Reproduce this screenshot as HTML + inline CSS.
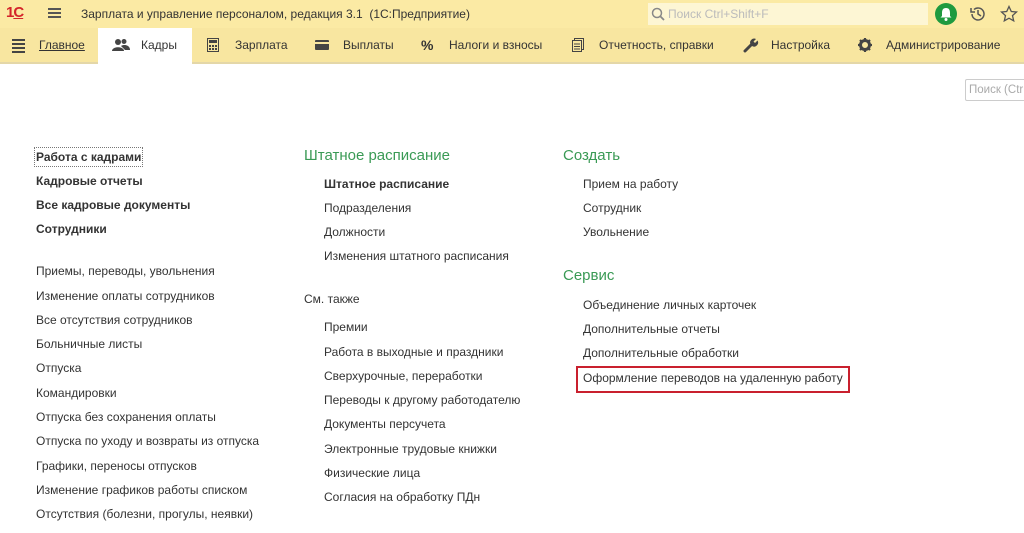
<!DOCTYPE html>
<html><head><meta charset="utf-8"><style>
body{margin:0;width:1024px;height:533px;background:#fff;position:relative;overflow:hidden;font-family:"Liberation Sans",Arial,sans-serif;color:#333}
.t{position:absolute;font-size:12px;line-height:16px;white-space:nowrap;top:0}
.b{font-weight:bold}
.h{position:absolute;font-size:15px;line-height:18px;color:#3a9a55;white-space:nowrap}
#top{position:absolute;left:0;top:0;width:1024px;height:28px;background:#fbeaa4}
#nav{position:absolute;left:0;top:28px;width:1024px;height:34px;background:#f8e6a0;border-bottom:2px solid #e4d7a8}
.n{position:absolute;top:0;height:34px;line-height:34px;font-size:12px;color:#333;white-space:nowrap}
</style></head><body>
<div id="top">
 <div style="position:absolute;left:6px;top:4px;font-size:15px;font-weight:bold;color:#d4252a;letter-spacing:-1px">1<span style="text-decoration:underline">C</span></div>
 <div style="position:absolute;left:48px;top:8px;width:13px;height:2px;background:#555;box-shadow:0 4px 0 #555,0 8px 0 #555"></div>
 <div class="t" style="left:81px;top:6px;color:#333">Зарплата и управление персоналом, редакция 3.1&nbsp; (1С:Предприятие)</div>
 <div style="position:absolute;left:648px;top:3px;width:280px;height:22px;background:#fdf6d4"></div>
 <svg style="position:absolute;left:651px;top:7px" width="14" height="14"><circle cx="6" cy="6" r="4.5" fill="none" stroke="#888" stroke-width="1.5"/><line x1="9" y1="9" x2="13" y2="13" stroke="#888" stroke-width="1.8"/></svg>
 <div class="t" style="left:668px;top:6px;color:#bbb">Поиск Ctrl+Shift+F</div>
 <svg style="position:absolute;left:935px;top:3px" width="22" height="22"><circle cx="11" cy="11" r="11" fill="#1f9a3f"/><path d="M11 5c-3 0-4 2-4 5v3l-1.5 1.5h11L15 13v-3c0-3-1-5-4-5z" fill="#fff"/><circle cx="11" cy="16.5" r="1.5" fill="#fff"/></svg>
 <svg style="position:absolute;left:969px;top:5px" width="18" height="18"><path d="M3 9a6 6 0 1 0 2-4.5" fill="none" stroke="#555" stroke-width="1.5"/><path d="M2 3v4h4" fill="none" stroke="#555" stroke-width="1.5"/><path d="M9 5v4l3 2" fill="none" stroke="#555" stroke-width="1.5"/></svg>
 <svg style="position:absolute;left:1000px;top:5px" width="18" height="18"><path d="M9 1.5l2.3 5 5.2.5-4 3.6 1.2 5.2L9 13.2 4.3 15.8l1.2-5.2-4-3.6 5.2-.5z" fill="none" stroke="#555" stroke-width="1.3"/></svg>
</div>
<div id="nav">
 <div style="position:absolute;left:12px;top:11px;width:13px;height:2px;background:#444;box-shadow:0 4px 0 #444,0 8px 0 #444,0 12px 0 #444"></div>
 <div class="n" style="left:39px;text-decoration:underline">Главное</div>
 <div style="position:absolute;left:98px;top:0;width:94px;height:36px;background:#fff"></div>
 <svg style="position:absolute;left:112px;top:10px" width="18" height="14"><circle cx="6" cy="4" r="3" fill="#444"/><circle cx="12" cy="3.5" r="2.5" fill="#444"/><path d="M0 13c0-5 12-5 12 0z" fill="#444"/><path d="M9 8c3-2 9-1 9 4h-5z" fill="#444"/></svg>
 <div class="n" style="left:141px">Кадры</div>
 <svg style="position:absolute;left:207px;top:10px" width="12" height="14"><rect x="0.5" y="0.5" width="11" height="13" fill="none" stroke="#444"/><rect x="2" y="2" width="8" height="3" fill="#444"/><path d="M2 7h2v2H2zM5 7h2v2H5zM8 7h2v2H8zM2 10h2v2H2zM5 10h2v2H5zM8 10h2v2H8z" fill="#444"/></svg>
 <div class="n" style="left:235px">Зарплата</div>
 <svg style="position:absolute;left:315px;top:12px" width="14" height="10"><rect width="14" height="10" rx="1" fill="#444"/><rect y="2" width="14" height="2" fill="#f8e6a0"/></svg>
 <div class="n" style="left:343px">Выплаты</div>
 <div class="n" style="left:421px;font-weight:bold;font-size:14px">%</div>
 <div class="n" style="left:449px">Налоги и взносы</div>
 <svg style="position:absolute;left:572px;top:10px" width="12" height="14"><rect x="2.5" y="0.5" width="9" height="11" fill="none" stroke="#444"/><rect x="0.5" y="2.5" width="9" height="11" fill="#f8e6a0" stroke="#444"/><path d="M2 6h6M2 8.5h6M2 11h6" stroke="#444"/></svg>
 <div class="n" style="left:599px">Отчетность, справки</div>
 <svg style="position:absolute;left:743px;top:9px" width="16" height="16"><path d="M2 14l7-7" stroke="#444" stroke-width="3" stroke-linecap="round"/><path d="M8 8a4 4 0 0 1 5-6l-2.5 2.5 1.5 1.5L14.5 3.5A4 4 0 0 1 9 9z" fill="#444"/></svg>
 <div class="n" style="left:771px">Настройка</div>
 <svg style="position:absolute;left:858px;top:10px" width="14" height="14"><circle cx="7" cy="7" r="4.5" fill="none" stroke="#444" stroke-width="3"/><path d="M7 0v3M7 11v3M0 7h3M11 7h3M2 2l2 2M10 10l2 2M12 2l-2 2M2 12l2-2" stroke="#444" stroke-width="2.2"/></svg>
 <div class="n" style="left:886px">Администрирование</div>
</div>
<div style="position:absolute;left:965px;top:79px;width:70px;height:20px;border:1px solid #ccc;border-radius:2px"></div>
<div class="t" style="left:969px;top:82px;color:#aaa;font-size:11.5px">Поиск (Ctrl</div>

<div class="t b" style="left:36px;top:149px;outline:1px dotted #777;outline-offset:1px">Работа с кадрами</div>
<div class="t b" style="left:36px;top:173px">Кадровые отчеты</div>
<div class="t b" style="left:36px;top:197px">Все кадровые документы</div>
<div class="t b" style="left:36px;top:221px">Сотрудники</div>
<div class="t" style="left:36px;top:263px">Приемы, переводы, увольнения</div>
<div class="t" style="left:36px;top:288px">Изменение оплаты сотрудников</div>
<div class="t" style="left:36px;top:312px">Все отсутствия сотрудников</div>
<div class="t" style="left:36px;top:336px">Больничные листы</div>
<div class="t" style="left:36px;top:360px">Отпуска</div>
<div class="t" style="left:36px;top:385px">Командировки</div>
<div class="t" style="left:36px;top:409px">Отпуска без сохранения оплаты</div>
<div class="t" style="left:36px;top:433px">Отпуска по уходу и возвраты из отпуска</div>
<div class="t" style="left:36px;top:458px">Графики, переносы отпусков</div>
<div class="t" style="left:36px;top:482px">Изменение графиков работы списком</div>
<div class="t" style="left:36px;top:506px">Отсутствия (болезни, прогулы, неявки)</div>

<div class="h" style="left:304px;top:147px">Штатное расписание</div>
<div class="t b" style="left:324px;top:176px">Штатное расписание</div>
<div class="t" style="left:324px;top:200px">Подразделения</div>
<div class="t" style="left:324px;top:224px">Должности</div>
<div class="t" style="left:324px;top:248px">Изменения штатного расписания</div>
<div class="t" style="left:304px;top:291px">См. также</div>
<div class="t" style="left:324px;top:319px">Премии</div>
<div class="t" style="left:324px;top:344px">Работа в выходные и праздники</div>
<div class="t" style="left:324px;top:368px">Сверхурочные, переработки</div>
<div class="t" style="left:324px;top:392px">Переводы к другому работодателю</div>
<div class="t" style="left:324px;top:416px">Документы персучета</div>
<div class="t" style="left:324px;top:441px">Электронные трудовые книжки</div>
<div class="t" style="left:324px;top:465px">Физические лица</div>
<div class="t" style="left:324px;top:489px">Согласия на обработку ПДн</div>

<div class="h" style="left:563px;top:147px">Создать</div>
<div class="t" style="left:583px;top:176px">Прием на работу</div>
<div class="t" style="left:583px;top:200px">Сотрудник</div>
<div class="t" style="left:583px;top:224px">Увольнение</div>
<div class="h" style="left:563px;top:267px">Сервис</div>
<div class="t" style="left:583px;top:297px">Объединение личных карточек</div>
<div class="t" style="left:583px;top:321px">Дополнительные отчеты</div>
<div class="t" style="left:583px;top:345px">Дополнительные обработки</div>
<div class="t" style="left:583px;top:370px">Оформление переводов на удаленную работу</div>
<div style="position:absolute;left:576px;top:366px;width:270px;height:23px;border:2px solid #c9202e"></div>
</body></html>
